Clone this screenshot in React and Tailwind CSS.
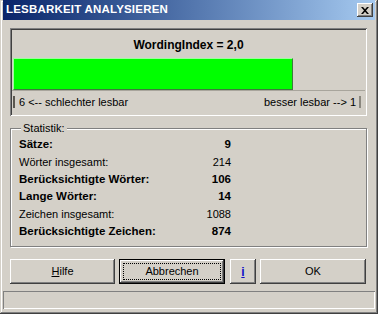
import React from 'react';

const raised =
  'bg-[#d4d0c8] shadow-[inset_-1px_-1px_#404040,inset_1px_1px_#ffffff,inset_-2px_-2px_#808080,inset_2px_2px_#d4d0c8]';

const stats = [
  { label: 'Sätze:', value: '9', bold: true },
  { label: 'Wörter insgesamt:', value: '214', bold: false },
  { label: 'Berücksichtigte Wörter:', value: '106', bold: true },
  { label: 'Lange Wörter:', value: '14', bold: true },
  { label: 'Zeichen insgesamt:', value: '1088', bold: false },
  { label: 'Berücksichtigte Zeichen:', value: '874', bold: true },
];

const Button = ({ children, className = '' }) => (
  <button
    type="button"
    className={`h-[25px] flex items-center justify-center text-black text-[11px] ${raised} ${className}`}
  >
    {children}
  </button>
);

const App = () => {
  return (
    <div className="w-[378px] h-[314px] bg-[#d4d0c8] font-['Liberation_Sans',Arial,sans-serif] text-[11px] text-black flex flex-col shadow-[inset_-1px_-1px_#404040,inset_1px_1px_#d4d0c8,inset_-2px_-2px_#808080,inset_2px_2px_#ffffff] overflow-hidden">
      {/* title bar */}
      <div className="mx-[3px] h-[20px] bg-gradient-to-r from-[#0a246a] to-[#a6caf0] flex items-center justify-between pl-[3px] pr-[2px]">
        <span className="text-white font-bold text-[11.5px] tracking-[0.2px]">LESBARKEIT ANALYSIEREN</span>
        <div className={`w-[16px] h-[14px] flex items-center justify-center ${raised}`}>
          <svg width="8" height="7" viewBox="0 0 8 7">
            <path d="M0 0h2l2 2.2L6 0h2L5 3.5 8 7H6L4 4.8 2 7H0l3-3.5z" fill="#000" />
          </svg>
        </div>
      </div>

      <div className="pl-[10px] pr-[11px] pt-[8px] flex flex-col">
        {/* index panel */}
        <div className="h-[88px] flex flex-col shadow-[inset_1px_1px_#808080,inset_-1px_-1px_#ffffff,inset_2px_2px_#404040,inset_-2px_-2px_#d4d0c8] px-[3px]">
          <div className="h-[30px] flex items-end justify-center pb-[4px] font-bold text-[12px]">
            WordingIndex = 2,0
          </div>
          <div className="h-[32px] w-[280px] bg-[#00ff00] border border-t-[#9cff9c] border-l-[#9cff9c] border-r-[#3d7a3d] border-b-[#3d7a3d]" />
          <div className="h-[1px] bg-[#a8a59c] -mx-[1px]" />
          <div className="flex justify-between items-center h-[18px] mt-[2px]">
            <div className="flex items-center gap-[4px]">
              <span className="w-[2px] h-[12px] bg-[#5a5750]" />
              <span>6 &lt;-- schlechter lesbar</span>
            </div>
            <div className="flex items-center gap-[3px] pr-[3px]">
              <span>besser lesbar --&gt; 1</span>
              <span className="w-[2px] h-[12px] bg-[#8a877e]" />
            </div>
          </div>
        </div>

        {/* statistik group */}
        <div className="relative mt-[12px] h-[119px] border border-[#808080] shadow-[inset_1px_1px_#ffffff,1px_1px_#ffffff] pl-[8px] pt-[7px]">
          <span className="absolute -top-[8px] left-[10px] px-[2px] bg-[#d4d0c8] leading-[14px]">Statistik:</span>
          {stats.map((s) => (
            <div key={s.label} className="w-[212px] h-[17.3px] flex items-center justify-between">
              <span className={s.bold ? 'font-bold text-[11.5px]' : ''}>{s.label}</span>
              <span className={s.bold ? 'font-bold text-[11.5px]' : ''}>{s.value}</span>
            </div>
          ))}
        </div>

        {/* buttons */}
        <div className="mt-[12px] flex">
          <Button className="w-[105px]">
            <span>
              <span className="underline">H</span>ilfe
            </span>
          </Button>
          <button
            type="button"
            className="ml-[4px] w-[106px] h-[25px] border border-black bg-[#d4d0c8] shadow-[inset_-1px_-1px_#404040,inset_1px_1px_#ffffff,inset_-2px_-2px_#808080] p-[3px]"
          >
            <span className="w-full h-full flex items-center justify-center border border-dotted border-black text-[11px]">
              Abbrechen
            </span>
          </button>
          <Button className="ml-[5px] w-[26px]">
            <span className="text-[#1010c8] font-bold underline text-[12px]">i</span>
          </Button>
          <Button className="ml-[4px] w-[106px]">OK</Button>
        </div>

        {/* status bar */}
        <div className="mt-[7px] -ml-[7px] -mr-[8px] h-[18px] shadow-[inset_1px_1px_#808080,inset_-1px_-1px_#ffffff]" />
      </div>
    </div>
  );
};

export default App;
